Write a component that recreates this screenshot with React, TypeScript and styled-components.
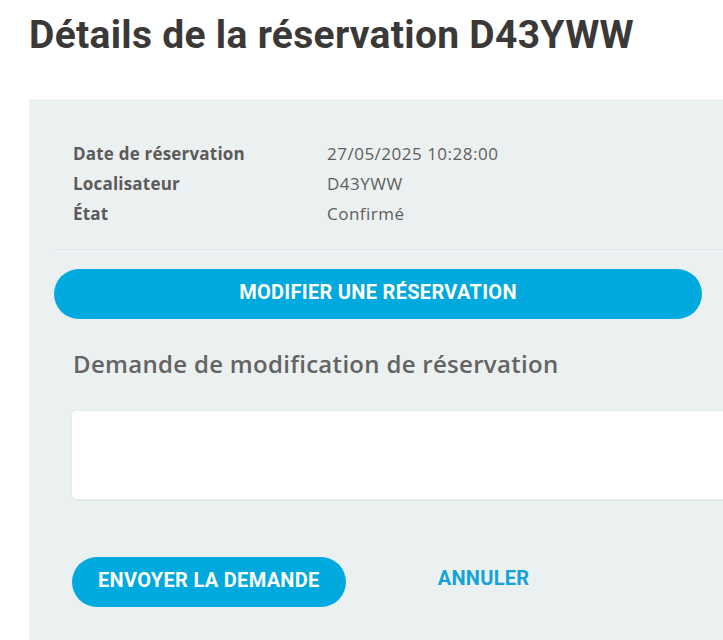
import React, { useState } from 'react';
import styled, { createGlobalStyle } from 'styled-components';

const GlobalStyle = createGlobalStyle`
  html, body {
    margin: 0;
    padding: 0;
    background: #ffffff;
    overflow: hidden;
  }
  body {
    font-family: Roboto, "Liberation Sans", sans-serif;
  }
`;

const Page = styled.div`
  padding-left: 29px;
  width: 820px;
`;

const Title = styled.h1`
  margin: 12px 0 41px 0;
  font-size: 39px;
  line-height: 46px;
  font-weight: 700;
  letter-spacing: 0.3px;
  color: #3b3838;
`;

const Panel = styled.section`
  background: #ebf0f1;
  padding: 39px 25px 40px 25px;
`;

const Details = styled.dl`
  margin: 0;
  padding: 0 0 21px 19px;
  display: grid;
  grid-template-columns: 254px 1fr;
  grid-auto-rows: 30px;
  align-items: center;
  font-family: "Open Sans", Roboto, sans-serif;
  font-size: 17px;
`;

const Label = styled.dt`
  font-weight: 700;
  letter-spacing: 0.2px;
  color: #5c5a5a;
`;

const Value = styled.dd`
  margin: 0;
  letter-spacing: 0.5px;
  color: #5f5e5e;
`;

const Divider = styled.hr`
  margin: 0 0 19px 0;
  border: none;
  border-top: 1px solid #dde3e5;
`;

const PillButton = styled.button<{ $wide?: boolean }>`
  display: block;
  box-sizing: border-box;
  height: 50px;
  width: ${(p) => (p.$wide ? '648px' : 'auto')};
  padding: 0 26px 4px 26px;
  border: none;
  border-radius: 25px;
  background: #00a9de;
  color: #ffffff;
  font-family: Roboto, "Liberation Sans", sans-serif;
  font-size: 20px;
  font-weight: 700;
  letter-spacing: 0.3px;
  text-transform: uppercase;
  cursor: pointer;
`;

const Block = styled.div`
  padding-left: 18px;
`;

const Heading = styled.h2`
  margin: 30px 0 32px 1px;
  font-family: "Open Sans", Roboto, sans-serif;
  font-size: 24px;
  line-height: 30px;
  font-weight: 600;
  letter-spacing: 0.3px;
  color: #656363;
`;

const Request = styled.textarea`
  display: block;
  box-sizing: border-box;
  width: 720px;
  height: 88px;
  border: none;
  border-radius: 5px;
  background: #ffffff;
  box-shadow: 0 1px 3px rgba(0, 0, 0, 0.06);
  resize: none;
  padding: 12px 16px;
  font-family: "Open Sans", Roboto, sans-serif;
  font-size: 16px;
  outline: none;
`;

const Actions = styled.div`
  display: flex;
  align-items: center;
  gap: 92px;
  margin-top: 58px;
`;

const LinkButton = styled.button`
  border: none;
  background: none;
  padding: 0;
  margin-top: -8px;
  color: #14a3d9;
  font-family: Roboto, "Liberation Sans", sans-serif;
  font-size: 20px;
  font-weight: 700;
  letter-spacing: 0.3px;
  text-transform: uppercase;
  cursor: pointer;
`;

const rows = [
  { label: 'Date de réservation', value: '27/05/2025 10:28:00' },
  { label: 'Localisateur', value: 'D43YWW' },
  { label: 'État', value: 'Confirmé' },
];

const App: React.FC = () => {
  const [text, setText] = useState('');

  return (
    <>
      <GlobalStyle />
      <Page>
        <Title>Détails de la réservation D43YWW</Title>
        <Panel>
          <Details>
            {rows.map((r) => (
              <React.Fragment key={r.label}>
                <Label>{r.label}</Label>
                <Value>{r.value}</Value>
              </React.Fragment>
            ))}
          </Details>
          <Divider />
          <PillButton $wide>Modifier une réservation</PillButton>
          <Block>
            <Heading>Demande de modification de réservation</Heading>
            <Request value={text} onChange={(e) => setText(e.target.value)} />
            <Actions>
              <PillButton>Envoyer la demande</PillButton>
              <LinkButton>Annuler</LinkButton>
            </Actions>
          </Block>
        </Panel>
      </Page>
    </>
  );
};

export default App;
